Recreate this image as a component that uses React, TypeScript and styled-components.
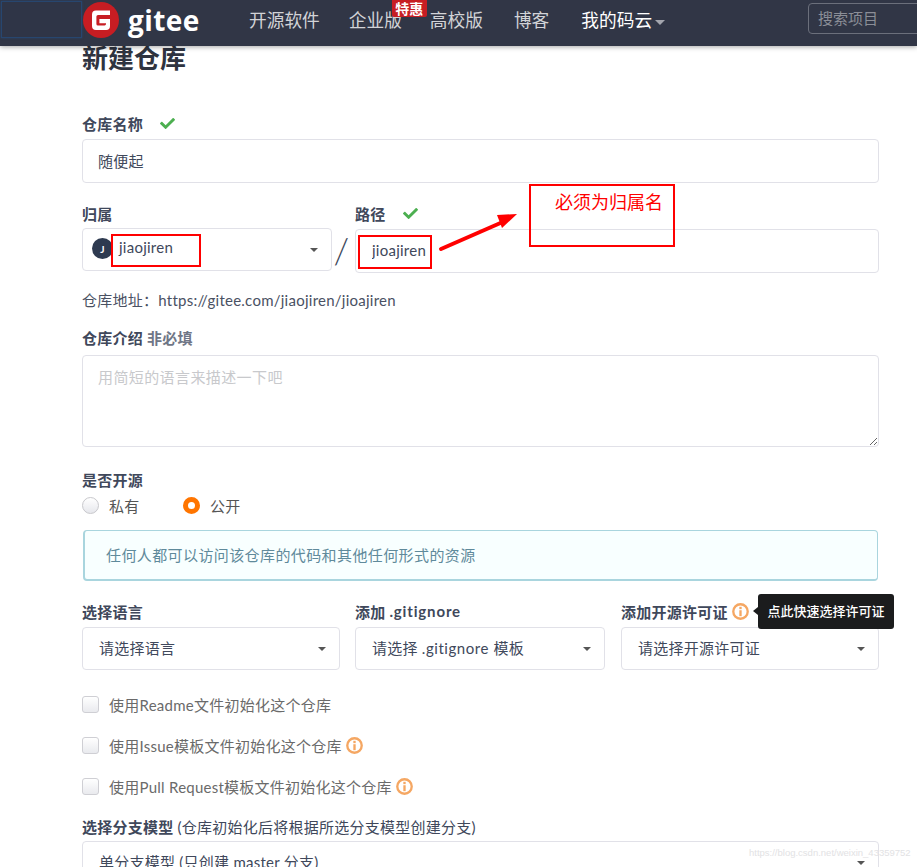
import styled, { createGlobalStyle } from "styled-components"
import { FaCheck } from "react-icons/fa"

const FONT = `Lato, "Noto Sans CJK SC", sans-serif`

const GlobalStyle = createGlobalStyle`
  html, body {
    margin: 0;
    height: 867px;
    overflow: hidden;
    background: #fff;
    font-family: ${FONT};
  }
  * {
    box-sizing: border-box;
  }
`

const Page = styled.div`
  position: relative;
  width: 917px;
  height: 867px;
  overflow: hidden;
`

const Header = styled.header`
  position: relative;
  z-index: 2;
  display: flex;
  align-items: center;
  height: 46px;
  background: #313646;
  box-shadow: 0 1px 5px rgba(0, 0, 0, 0.35);
`

const Redacted = styled.div`
  width: 81px;
  height: 37px;
  margin: -8px 0 0 1px;
  background: #2f3547;
  border: 1px solid #27466f;
  box-shadow: 0 0 2px #27466f;
`

const Logo = styled.div`
  display: flex;
  align-items: center;
  width: 166px;
  margin: -6px 0 0 1px;
  gap: 9px;
`

const LogoText = styled.span`
  font-family: "Open Sans", sans-serif;
  font-size: 28px;
  font-weight: 700;
  line-height: 34px;
  letter-spacing: 0.4px;
  color: #fff;
`

const Nav = styled.nav`
  display: flex;
  align-items: center;
  margin-top: -4px;
`

const NavItem = styled.a<{ $active?: boolean; $gap?: number }>`
  position: relative;
  display: flex;
  align-items: center;
  margin-right: ${(p) => p.$gap ?? 29}px;
  font-size: 17.7px;
  line-height: 24px;
  white-space: nowrap;
  color: ${(p) => (p.$active ? "#fff" : "#d2d3d7")};
`

const Caret = styled.i`
  width: 0;
  height: 0;
  margin: 3px 0 0 3px;
  border-style: solid;
  border-width: 5px 5px 0;
  border-color: #a3a5ad transparent transparent;
`

const Badge = styled.span`
  position: absolute;
  top: -9px;
  left: 43px;
  width: 35px;
  height: 17px;
  border-radius: 0 0 2px 2px;
  background: #c71d23;
  color: #fff;
  font-size: 14px;
  font-weight: 700;
  line-height: 17px;
  text-align: center;
`

const Search = styled.div`
  flex: none;
  width: 130px;
  height: 31px;
  margin: -10px -21px 0 auto;
  padding-left: 9px;
  border: 1px solid #6b6f7b;
  border-radius: 4px;
  color: #8b8e97;
  font-size: 15px;
  line-height: 29px;
`

const Form = styled.main`
  padding: 0 38px 0 82px;
  color: #40485b;
  font-size: 15px;
  letter-spacing: 0.25px;
`

const Title = styled.h1`
  margin: 0 0 44px;
  font-size: 26px;
  font-weight: 700;
  line-height: 24px;
  letter-spacing: 0;
  color: #2f3440;
`

const Label = styled.div<{ $top?: number; $bottom?: number }>`
  display: flex;
  align-items: center;
  height: 20px;
  margin-top: ${(p) => p.$top ?? 0}px;
  margin-bottom: ${(p) => p.$bottom ?? 5}px;
  padding-bottom: 2px;
  font-size: 15px;
  font-weight: 700;
  white-space: nowrap;
`

const Hint = styled.span`
  margin-left: 4px;
  color: #6f7686;
`

const Plain = styled.span`
  margin-left: 4px;
  font-weight: 400;
`

const Latin = styled.span<{ $spacing: number }>`
  letter-spacing: ${(p) => p.$spacing}px;
  white-space: pre;
`

const Valid = styled(FaCheck)`
  margin-left: 17px;
  width: 15px;
  height: 15px;
  color: #4caf50;
`

const TextInput = styled.input<{ $left?: number }>`
  display: block;
  width: 100%;
  height: 44px;
  padding: 0 15px 2px ${(p) => p.$left ?? 15}px;
  border: 1px solid #e1e1e8;
  border-radius: 4px;
  outline: none;
  color: #40485b;
  font-family: ${FONT};
  font-size: 15px;
  letter-spacing: 0.25px;
`

const TextArea = styled.textarea`
  display: block;
  width: 100%;
  height: 92px;
  padding: 10px 15px;
  border: 1px solid #e1e1e8;
  border-radius: 4px;
  outline: none;
  resize: vertical;
  font-family: ${FONT};
  font-size: 15px;
  letter-spacing: 0.4px;
  line-height: 22px;
  &::placeholder {
    color: #c8c9cc;
  }
`

const OwnerRow = styled.div`
  display: flex;
  margin-top: 21px;
`

const OwnerColumn = styled.div`
  flex: none;
  width: 250px;
`

const Slash = styled.div`
  flex: none;
  width: 23px;
  height: 69px;
  padding: 23px 4px 0 0;
  color: #40485b;
  font-size: 36px;
  font-weight: 300;
  line-height: 46px;
  text-align: center;
`

const PathColumn = styled.div`
  flex: 1;
`

const Select = styled.div<{ $height?: number }>`
  position: relative;
  display: flex;
  align-items: center;
  height: ${(p) => p.$height ?? 43}px;
  padding: 0 0 2px 16px;
  border: 1px solid #e1e1e8;
  border-radius: 4px;
  color: #40485b;
  white-space: nowrap;
  &::after {
    content: "";
    position: absolute;
    right: 13px;
    top: 50%;
    margin-top: -2px;
    border-style: solid;
    border-width: 4px 4px 0;
    border-color: #555 transparent transparent;
  }
`

const Avatar = styled.span`
  display: flex;
  align-items: center;
  justify-content: center;
  flex: none;
  width: 21px;
  height: 21px;
  margin: 0 6px 0 -7px;
  border-radius: 50%;
  background: #2e3a50;
  color: #fff;
  font-size: 10px;
  font-weight: 700;
`

const OwnerName = styled.span`
  margin-top: -4px;
`

const Address = styled.div`
  height: 20px;
  margin-top: 18px;
  line-height: 18px;
  color: #4a5163;
`

const Radios = styled.div`
  display: flex;
  height: 20px;
  margin-top: 6px;
`

const RadioItem = styled.label`
  display: flex;
  align-items: center;
  width: 101px;
  padding-bottom: 2px;
  gap: 10px;
  color: #555;
`

const RadioDot = styled.span<{ $on?: boolean }>`
  width: 17px;
  height: 17px;
  border-radius: 50%;
  ${(p) =>
    p.$on
      ? `border: 5px solid #ff7500; background: #fff;`
      : `border: 1px solid #c8c8cc; background: linear-gradient(#fff, #e6e7ec);`}
`

const Message = styled.div`
  display: flex;
  align-items: center;
  height: 51px;
  margin: 14px 1px 0;
  padding: 0 0 1px 21px;
  border: 1px solid #a9d5de;
  border-left-width: 2px;
  border-bottom-width: 2px;
  border-radius: 4px;
  background: #f8ffff;
  color: #5f8a9b;
  letter-spacing: 0.4px;
`

const ChoiceRow = styled.div`
  display: grid;
  grid-template-columns: 258px 250px 1fr;
  column-gap: 15px;
  margin-top: 21px;
  > :last-child {
    margin-left: 1px;
  }
`

const CheckRow = styled.label<{ $top: number }>`
  display: flex;
  align-items: center;
  height: 20px;
  margin-top: ${(p) => p.$top}px;
  padding-bottom: 2px;
  color: #6a6a6a;
`

const Box = styled.span`
  flex: none;
  width: 17px;
  height: 17px;
  margin-right: 10px;
  border: 1px solid #cfcfd4;
  border-radius: 3px;
  background: linear-gradient(#fff, #e9eaee);
`

const InfoMark = styled.svg`
  flex: none;
  width: 17px;
  height: 17px;
  margin-left: 4px;
`

const Tooltip = styled.div`
  position: absolute;
  left: 758px;
  top: 594px;
  width: 136px;
  height: 35px;
  border-radius: 3px;
  background: #1b1c1d;
  color: #fff;
  font-size: 13px;
  font-weight: 500;
  line-height: 35px;
  text-align: center;
  &::before {
    content: "";
    position: absolute;
    left: -5px;
    top: 13px;
    border-style: solid;
    border-width: 4.5px 5px 4.5px 0;
    border-color: transparent #1b1c1d transparent transparent;
  }
`

const RedBox = styled.div<{ $x: number; $y: number; $w: number; $h: number }>`
  position: absolute;
  left: ${(p) => p.$x}px;
  top: ${(p) => p.$y}px;
  width: ${(p) => p.$w}px;
  height: ${(p) => p.$h}px;
  border: 2px solid #f00;
`

const Note = styled.span`
  position: absolute;
  left: 24px;
  top: 3px;
  color: #f00;
  font-size: 18px;
  line-height: 26px;
  white-space: nowrap;
`

const Arrow = styled.svg`
  position: absolute;
  left: 436px;
  top: 208px;
`

const Watermark = styled.div`
  position: absolute;
  left: 749px;
  top: 846px;
  color: #e2e2e4;
  font-family: "Liberation Sans", sans-serif;
  font-size: 9.5px;
  line-height: 14px;
  white-space: nowrap;
`

const Info = () => (
  <InfoMark viewBox="0 0 16 16">
    <circle cx="8" cy="8" r="6.8" fill="none" stroke="#f5a763" strokeWidth="2.2" />
    <rect x="6.9" y="3.6" width="2.2" height="2.2" fill="#f5a763" />
    <rect x="6.9" y="6.8" width="2.2" height="5.6" fill="#f5a763" />
  </InfoMark>
)

const GiteeMark = () => (
  <svg width="36" height="36" viewBox="0 0 36 36">
    <circle cx="18" cy="18" r="18" fill="#c71d23" />
    <path
      d="M9 12.5a4 4 0 0 1 4-4h14v4.4H15a1.6 1.6 0 0 0-1.6 1.6v7.4a1.6 1.6 0 0 0 1.6 1.6h6.6a1.4 1.4 0 0 0 1.4-1.4v-.9h-6.6v-4.2H27v7a3.9 3.9 0 0 1-3.9 3.9H13a4 4 0 0 1-4-4Z"
      fill="#fff"
    />
  </svg>
)

const App = () => {
  return (
    <>
      <GlobalStyle />
      <Page>
        <Header>
          <Redacted />
          <Logo>
            <GiteeMark />
            <LogoText>gitee</LogoText>
          </Logo>
          <Nav>
            <NavItem>开源软件</NavItem>
            <NavItem $gap={28}>
              企业版
              <Badge>特惠</Badge>
            </NavItem>
            <NavItem $gap={31}>高校版</NavItem>
            <NavItem $gap={32}>博客</NavItem>
            <NavItem $active $gap={0}>
              我的码云
              <Caret />
            </NavItem>
          </Nav>
          <Search>搜索项目</Search>
        </Header>

        <Form>
          <Title>新建仓库</Title>

          <Label>
            仓库名称
            <Valid />
          </Label>
          <TextInput readOnly value="随便起" />

          <OwnerRow>
            <OwnerColumn>
              <Label $bottom={4}>归属</Label>
              <Select>
                <Avatar>J</Avatar>
                <OwnerName>jiaojiren</OwnerName>
              </Select>
            </OwnerColumn>
            <Slash>/</Slash>
            <PathColumn>
              <Label>
                路径
                <Valid />
              </Label>
              <TextInput readOnly value="jioajiren" $left={16} />
            </PathColumn>
          </OwnerRow>

          <Address>仓库地址：https://gitee.com/jiaojiren/jioajiren</Address>

          <Label $top={17} $bottom={7}>
            仓库介绍
            <Hint>非必填</Hint>
          </Label>
          <TextArea placeholder="用简短的语言来描述一下吧" />

          <Label $top={23} $bottom={0}>
            是否开源
          </Label>
          <Radios>
            <RadioItem>
              <RadioDot />
              私有
            </RadioItem>
            <RadioItem>
              <RadioDot $on />
              公开
            </RadioItem>
          </Radios>
          <Message>任何人都可以访问该仓库的代码和其他任何形式的资源</Message>

          <ChoiceRow>
            <div>
              <Label>选择语言</Label>
              <Select>请选择语言</Select>
            </div>
            <div>
              <Label>
                <Latin $spacing={0.25}>添加 </Latin>
                <Latin $spacing={0.85}>.gitignore</Latin>
              </Label>
              <Select>
                <Latin $spacing={0.25}>请选择 </Latin>
                <Latin $spacing={0.55}>.gitignore </Latin>
                <Latin $spacing={0.25}>模板</Latin>
              </Select>
            </div>
            <div>
              <Label>
                添加开源许可证
                <Info />
              </Label>
              <Select>请选择开源许可证</Select>
            </div>
          </ChoiceRow>

          <CheckRow $top={25}>
            <Box />
            使用Readme文件初始化这个仓库
          </CheckRow>
          <CheckRow $top={21}>
            <Box />
            使用Issue模板文件初始化这个仓库
            <Info />
          </CheckRow>
          <CheckRow $top={21}>
            <Box />
            使用Pull Request模板文件初始化这个仓库
            <Info />
          </CheckRow>

          <Label $top={20} $bottom={4}>
            选择分支模型
            <Plain>(仓库初始化后将根据所选分支模型创建分支)</Plain>
          </Label>
          <Select $height={43}>单分支模型 (只创建 master 分支)</Select>
        </Form>

        <Tooltip>点此快速选择许可证</Tooltip>

        <RedBox $x={111} $y={234} $w={90} $h={33} />
        <RedBox $x={358} $y={235} $w={74} $h={34} />
        <RedBox $x={529} $y={184} $w={146} $h={63}>
          <Note>必须为归属名</Note>
        </RedBox>
        <Arrow width="84" height="46" viewBox="0 0 84 46">
          <path d="M5 41 69 13" stroke="#f00" strokeWidth="4" strokeLinecap="round" />
          <path d="M81 6 61 7 66 20Z" fill="#f00" />
        </Arrow>

        <Watermark>https://blog.csdn.net/weixin_43359752</Watermark>
      </Page>
    </>
  )
}

export default App
